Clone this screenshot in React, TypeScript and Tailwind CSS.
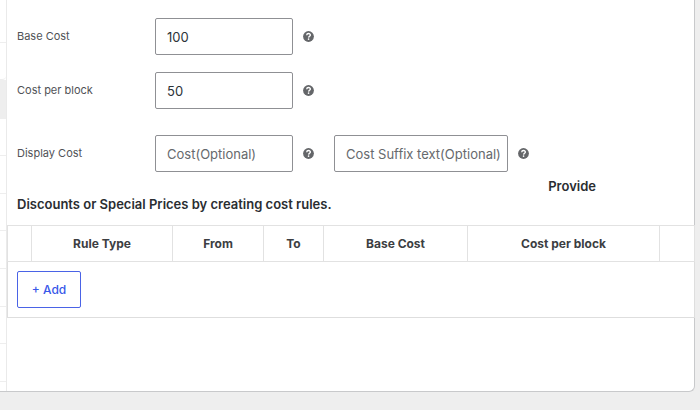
import React, { useState } from "react";

const menuItems = [
  "h-[43px]",
  "h-[37px] rounded-br-sm",
  "h-[39px] bg-[#eeeeee]",
  "h-[37px]",
  "h-[38px]",
  "h-[37px]",
  "h-[38px]",
  "h-[38px]",
  "h-[37px]",
  "h-[38px]",
];

const columns = [
  { label: "", width: "w-[24px]" },
  { label: "Rule Type", width: "w-[141px]" },
  { label: "From", width: "w-[91px]" },
  { label: "To", width: "w-[60px]" },
  { label: "Base Cost", width: "w-[144px]" },
  { label: "Cost per block", width: "w-[192px]" },
  { label: "", width: "w-[35px]" },
];

const inputClass =
  "h-[37px] pl-[11px] pr-1 border border-[#8f9094] rounded-xs bg-white text-[13px] text-[#2c3338] placeholder:text-[#66696d] focus:outline-none focus:border-[#3858e9]";

function HelpTip({ label }: { label: string }) {
  return (
    <button type="button" aria-label={label} className="ml-[10px] shrink-0">
      <svg viewBox="0 0 20 20" className="w-[11px] h-[11px] block">
        <circle cx="10" cy="10" r="9.8" fill="#646669" />
        <path
          d="M6.7 7.6C6.8 5.6 8.1 4.6 10.1 4.6C12.1 4.6 13.4 5.7 13.4 7.4C13.4 9.7 10.4 9.6 10.2 12"
          fill="none"
          stroke="#fff"
          strokeWidth="2.4"
        />
        <circle cx="10.1" cy="14.9" r="1.5" fill="#fff" />
      </svg>
    </button>
  );
}

function Field({
  id,
  label,
  children,
}: {
  id: string;
  label: string;
  children: React.ReactNode;
}) {
  return (
    <div className="flex items-center pl-[10px]">
      <label htmlFor={id} className="w-[138px] shrink-0 text-[11px] text-[#505256]">
        {label}
      </label>
      {children}
    </div>
  );
}

export default function App() {
  const [baseCost, setBaseCost] = useState("100");
  const [blockCost, setBlockCost] = useState("50");

  return (
    <div className="min-h-screen bg-[#eeeeee] pr-[5px] font-['Inter','Liberation_Sans',sans-serif]">
      <div className="flex bg-white border-r border-b border-[#c8c9cb] rounded-br-md">
        <ul className="w-[7px] shrink-0 border-r border-[#eaeaea]">
          {menuItems.map((item, idx) => (
            <li key={idx} className={`border-b border-[#eeeeee] ${item}`} />
          ))}
        </ul>

        <div className="flex-1 min-w-0 pt-[18px] pb-[73px]">
          <Field id="base-cost" label="Base Cost">
            <input
              id="base-cost"
              className={`w-[138px] ${inputClass}`}
              value={baseCost}
              onChange={(e) => setBaseCost(e.target.value)}
            />
            <HelpTip label="About base cost" />
          </Field>

          <div className="mt-[17px]">
            <Field id="block-cost" label="Cost per block">
              <input
                id="block-cost"
                className={`w-[138px] ${inputClass}`}
                value={blockCost}
                onChange={(e) => setBlockCost(e.target.value)}
              />
              <HelpTip label="About cost per block" />
            </Field>
          </div>

          <div className="mt-[26px]">
            <Field id="display-cost" label="Display Cost">
              <input
                id="display-cost"
                className={`w-[138px] ${inputClass}`}
                placeholder="Cost(Optional)"
              />
              <HelpTip label="About display cost" />
              <input
                aria-label="Cost suffix"
                className={`ml-5 w-[174px] ${inputClass}`}
                placeholder="Cost Suffix text(Optional)"
              />
              <HelpTip label="About cost suffix" />
            </Field>
          </div>

          <h2 className="mt-[5px] pl-[10px] text-[13px] leading-[18px] font-semibold text-[#2a2d31]">
            <span className="block text-right pr-[98px]">Provide</span>
            Discounts or Special Prices by creating cost rules.
          </h2>

          <table className="mt-[12px] w-full table-fixed border-collapse border border-[#dedede]">
            <thead>
              <tr className="h-[36px]">
                {columns.map((col, idx) => (
                  <th
                    key={idx}
                    scope="col"
                    className={`border border-[#e2e2e2] text-[12px] font-bold text-[#3c3e42] ${col.width}`}
                  >
                    {col.label}
                  </th>
                ))}
              </tr>
            </thead>
            <tbody>
              <tr className="h-[56px]">
                <td colSpan={7} className="px-[9px]">
                  <button
                    type="button"
                    className="block h-[37px] w-16 border border-[#4a63e6] rounded-xs bg-white text-[12px] font-medium text-[#3858e9]"
                  >
                    + Add
                  </button>
                </td>
              </tr>
            </tbody>
          </table>
        </div>
      </div>
    </div>
  );
}
